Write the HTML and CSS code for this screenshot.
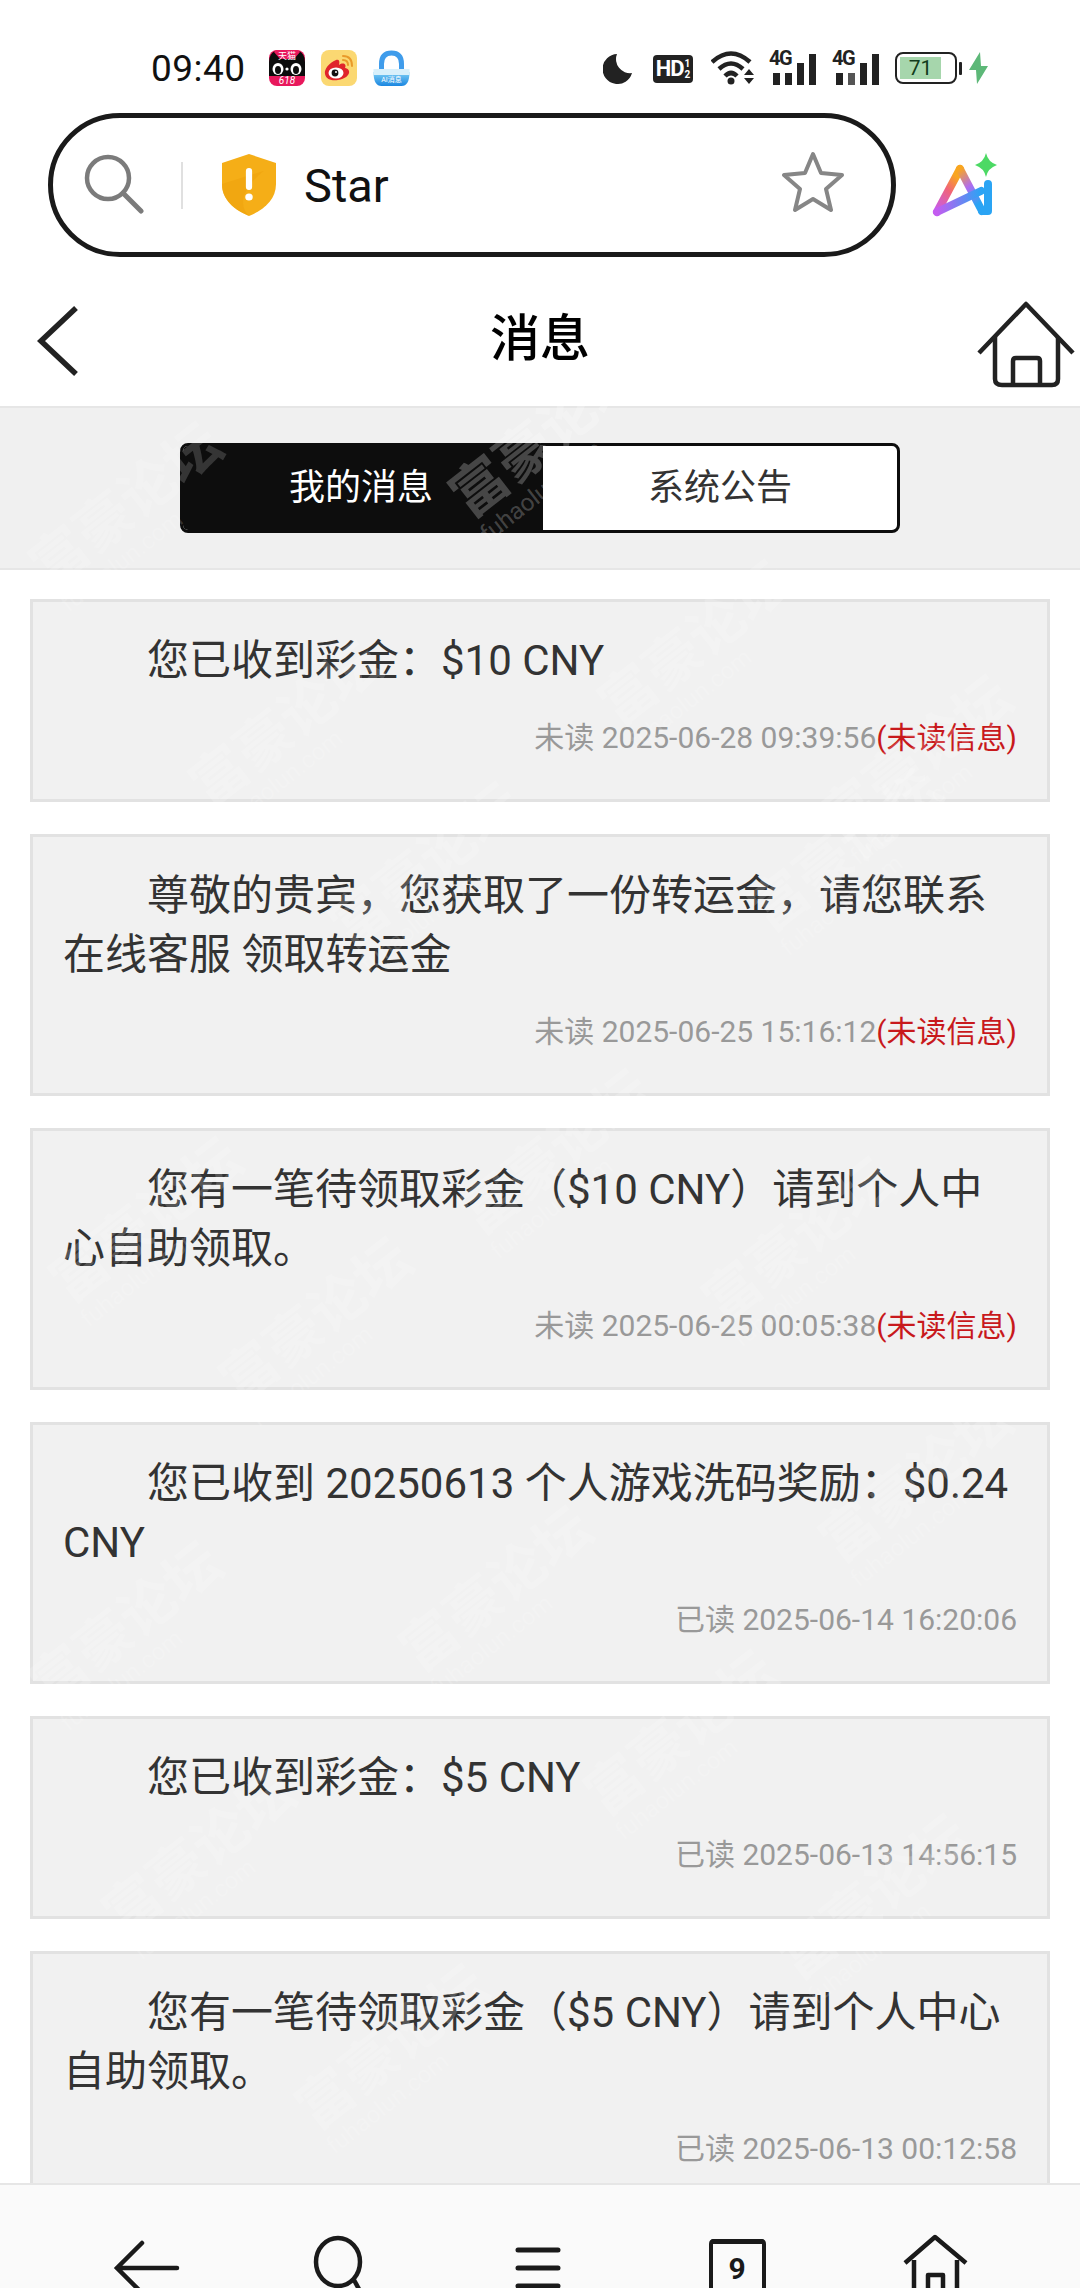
FILE: index.html
```html
<!DOCTYPE html>
<html lang="zh-CN">
<head>
  <meta charset="UTF-8">
  <title>消息</title>
  <link rel="stylesheet" href="styles.css">
</head>
<body>
  <div class="page">
    <!-- status bar -->
    <div class="status">
      <div class="status-left">
        <span class="time">09:40</span>
        <svg class="note note-first" width="36" height="36" viewBox="0 0 36 36">
          <rect width="36" height="36" rx="8" fill="#e8185c"/>
          <path d="M0 12 Q0 4 6 1 L12 8 H24 L30 1 Q36 4 36 12 V26 H0Z" fill="#0c0c0c"/>
          <path d="M8 0 H28 Q30 0 31 2 L25 9 H11 L5 2 Q6 0 8 0Z" fill="#e8185c"/>
          <text x="18" y="9" class="note-cn">天猫</text>
          <ellipse cx="9" cy="19" rx="5.5" ry="6" fill="#fff"/>
          <ellipse cx="27" cy="19" rx="5.5" ry="6" fill="#fff"/>
          <ellipse cx="9" cy="20" rx="3" ry="4" fill="#0c0c0c"/>
          <ellipse cx="27" cy="20" rx="3" ry="4" fill="#0c0c0c"/>
          <circle cx="18" cy="19" r="1.6" fill="#fff"/>
          <text x="18" y="34" class="note-618">618</text>
        </svg>
        <svg class="note" width="36" height="36" viewBox="0 0 36 36">
          <rect width="36" height="36" rx="8" fill="#fbd872"/>
          <path d="M15 10 C8 13 3 19 4 24 C5 30 12 31 17 30 C24 29 29 25 28 21 C27 18 24 18 24 18 C26 14 22 12 18 15 C19 11 18 9 15 10Z" fill="#e0242b"/>
          <ellipse cx="15" cy="23" rx="7.5" ry="5.5" fill="#fff"/>
          <circle cx="14" cy="23" r="3.4" fill="#111"/>
          <circle cx="15" cy="22" r="1" fill="#fff"/>
          <path d="M22 6 Q31 6 31 16 M22 10 Q27 10 27 15" fill="none" stroke="#e99a2a" stroke-width="2" stroke-linecap="round"/>
        </svg>
        <svg class="note" width="37" height="36" viewBox="0 0 36 36">
          <defs>
            <linearGradient id="lockBlue" x1="0" y1="0" x2="0" y2="1">
              <stop offset="0" stop-color="#7fd0f5"/>
              <stop offset="1" stop-color="#1a86e0"/>
            </linearGradient>
          </defs>
          <path d="M8 20 V14 Q8 3 18 3 Q28 3 28 14 V20" fill="none" stroke="#3f9ceb" stroke-width="5"/>
          <path d="M0 22 H36 Q36 36 28 36 H8 Q0 36 0 22Z" fill="url(#lockBlue)"/>
          <rect x="0" y="19" width="36" height="6" fill="#d8f0fb"/>
          <text x="18" y="32" class="note-lock">AI消息</text>
        </svg>
      </div>
      <div class="status-right">
        <svg class="moon" width="30" height="30" viewBox="0 0 30 30">
          <path d="M14 0 A15 15 0 1 0 29 19 A14 14 0 0 1 14 0Z" fill="#222"/>
        </svg>
        <span class="hd">HD<span class="hd-frac">1<br>2</span></span>
        <svg class="wifi" width="46" height="34" viewBox="0 0 46 34">
          <g fill="none" stroke="#222" stroke-width="4.5">
            <path d="M1 11 Q20 -6 39 11"/>
            <path d="M8 18 Q20 7 32 18"/>
            <path d="M14 25 Q20 19 26 25"/>
          </g>
          <circle cx="20" cy="30" r="3.5" fill="#222"/>
          <path d="M33 24 L38 18 L43 24Z M33 27 H43 L38 33Z" fill="#222"/>
        </svg>
        <div class="signal">
          <span class="signal-label">4G</span>
          <span class="bars">
            <i class="bar bar-1"></i><i class="bar bar-2"></i><i class="bar bar-3"></i><i class="bar bar-4"></i>
          </span>
        </div>
        <div class="signal signal-second">
          <span class="signal-label">4G</span>
          <span class="bars">
            <i class="bar bar-1"></i><i class="bar bar-2"></i><i class="bar bar-3"></i><i class="bar bar-4"></i>
          </span>
        </div>
        <div class="battery">
          <div class="battery-body">
            <div class="battery-fill">71</div>
          </div>
          <div class="battery-cap"></div>
        </div>
        <svg class="bolt" width="19" height="32" viewBox="0 0 19 32">
          <path d="M11 0 L0 18 H7 L8 32 L19 14 H12Z" fill="#5db878"/>
        </svg>
      </div>
    </div>

    <!-- browser address bar -->
    <div class="address">
      <div class="pill">
        <svg class="pill-search" width="60" height="60" viewBox="0 0 60 60">
          <circle cx="24" cy="24" r="21" fill="none" stroke="#7b7b7b" stroke-width="4.5"/>
          <path d="M39 39 L57 57" stroke="#7b7b7b" stroke-width="5" stroke-linecap="round"/>
        </svg>
        <span class="pill-divider"></span>
        <svg class="shield" width="54" height="62" viewBox="0 0 52 62" preserveAspectRatio="none">
          <path d="M26 0 L52 9 V30 C52 46 40 56 26 62 C12 56 0 46 0 30 V9Z" fill="#f5ae17"/>
          <path d="M0 30 V34 C2 47 13 56 26 62 C14 50 22 32 40 17 Z" fill="#eea20e" opacity="0.6"/>
          <rect x="23" y="14" width="6" height="22" rx="3" fill="#fff"/>
          <circle cx="26" cy="43" r="3.6" fill="#fff"/>
        </svg>
        <span class="pill-text">Star</span>
        <svg class="pill-star" width="62" height="62" viewBox="0 0 62 62">
          <path d="M31 3 L39 22 L60 24 L44 38 L49 59 L31 48 L13 59 L18 38 L2 24 L23 22Z" fill="none" stroke="#868686" stroke-width="4" stroke-linejoin="round"/>
        </svg>
      </div>
      <svg class="ai-logo" width="68" height="68" viewBox="0 0 68 68">
        <defs>
          <linearGradient id="aiLeft" x1="0" y1="1" x2="0.5" y2="0">
            <stop offset="0" stop-color="#c45cf0"/>
            <stop offset="0.6" stop-color="#f0637a"/>
            <stop offset="1" stop-color="#f9a61f"/>
          </linearGradient>
          <linearGradient id="aiRight" x1="0" y1="0" x2="0.4" y2="1">
            <stop offset="0" stop-color="#f9a61f"/>
            <stop offset="0.5" stop-color="#b06cf0"/>
            <stop offset="1" stop-color="#2aa4f4"/>
          </linearGradient>
          <linearGradient id="aiCross" x1="0" y1="0" x2="1" y2="0">
            <stop offset="0" stop-color="#c45cf0"/>
            <stop offset="1" stop-color="#2aa4f4"/>
          </linearGradient>
        </defs>
        <g fill="none" stroke-width="8" stroke-linecap="round" stroke-linejoin="round">
          <path d="M5 61 L28 18" stroke="url(#aiLeft)"/>
          <path d="M28 18 L50 60" stroke="url(#aiRight)"/>
          <path d="M5 61 L49 40" stroke="url(#aiCross)"/>
          <path d="M56 33 V60 H50" stroke="#2aa4f4"/>
        </g>
        <path d="M54 2 Q56 11 65 14 Q56 17 54 26 Q52 17 43 14 Q52 11 54 2Z" fill="#4cd964"/>
      </svg>
    </div>

    <!-- page title -->
    <header class="header">
      <svg class="back" width="44" height="74" viewBox="0 0 44 74">
        <path d="M39 4 L4 37 L39 70" fill="none" stroke="#222" stroke-width="5.5"/>
      </svg>
      <h1 class="title">消息</h1>
      <svg class="home" width="100" height="92" viewBox="0 0 100 92">
        <g fill="none" stroke="#222" stroke-width="4.5" stroke-linejoin="round">
          <path d="M2 52 L49 3 L96 52"/>
          <path d="M18 36 V78 Q18 84 25 84 H75 Q81 84 81 78 V36"/>
          <path d="M36 84 V60 Q36 57 39 57 H60 Q63 57 63 60 V84"/>
        </g>
      </svg>
    </header>

    <!-- switch -->
    <div class="tab-band">
      <div class="tabs">
        <div class="tab tab-active">我的消息</div>
        <div class="tab">系统公告</div>
      </div>
    </div>

    <!-- message list -->
    <main class="list">
      <article class="card">
        <p class="msg">您已收到彩金：$10 CNY</p>
        <p class="meta">未读 2025-06-28 09:39:56<span class="unread">(未读信息)</span></p>
      </article>
      <article class="card">
        <p class="msg">尊敬的贵宾，您获取了一份转运金，请您联系在线客服 领取转运金</p>
        <p class="meta">未读 2025-06-25 15:16:12<span class="unread">(未读信息)</span></p>
      </article>
      <article class="card">
        <p class="msg">您有一笔待领取彩金（$10 CNY）请到个人中心自助领取。</p>
        <p class="meta">未读 2025-06-25 00:05:38<span class="unread">(未读信息)</span></p>
      </article>
      <article class="card">
        <p class="msg">您已收到 20250613 个人游戏洗码奖励：$0.24 CNY</p>
        <p class="meta">已读 2025-06-14 16:20:06</p>
      </article>
      <article class="card">
        <p class="msg">您已收到彩金：$5 CNY</p>
        <p class="meta">已读 2025-06-13 14:56:15</p>
      </article>
      <article class="card">
        <p class="msg">您有一笔待领取彩金（$5 CNY）请到个人中心自助领取。</p>
        <p class="meta">已读 2025-06-13 00:12:58</p>
      </article>
    </main>

    <!-- browser toolbar, cut off by the bottom of the screen -->
    <nav class="toolbar">
      <svg width="80" height="70" viewBox="0 0 80 70">
        <path d="M35 13 L10 38 L35 63 M10 38 H70" fill="none" stroke="#1a1a1a" stroke-width="4.5" stroke-linecap="round"/>
      </svg>
      <svg width="80" height="70" viewBox="0 0 80 70">
        <ellipse cx="34" cy="32" rx="22" ry="24" fill="none" stroke="#1a1a1a" stroke-width="4.5"/>
        <path d="M50 50 L62 72" stroke="#1a1a1a" stroke-width="4.5"/>
      </svg>
      <svg width="80" height="70" viewBox="0 0 80 70">
        <path d="M17 20 H57 M17 38 H57 M17 56 H57" stroke="#1a1a1a" stroke-width="5" stroke-linecap="round"/>
      </svg>
      <svg width="80" height="70" viewBox="0 0 80 70">
        <path d="M13 80 V14 Q13 11 16 11 H63 Q66 11 66 14 V80" fill="none" stroke="#1a1a1a" stroke-width="4"/>
        <rect x="13" y="9" width="53" height="5" rx="2" fill="#1a1a1a"/>
        <text x="39" y="49" class="tab-count">9</text>
      </svg>
      <svg width="80" height="70" viewBox="0 0 80 70">
        <g fill="none" stroke="#1a1a1a" stroke-width="4.5" stroke-linejoin="round">
          <path d="M10 33 L40 7 L71 33"/>
          <path d="M19 30 V75 M62 30 V75"/>
          <path d="M33 75 V45 H48 V75"/>
        </g>
      </svg>
    </nav>

    <!-- site watermark laid over the whole shot -->
    <div class="marks">
      <span class="mark">富豪论坛<small>fuhaolun.com</small></span>
      <span class="mark">富豪论坛<small>fuhaolun.com</small></span>
      <span class="mark">富豪论坛<small>fuhaolun.com</small></span>
      <span class="mark">富豪论坛<small>fuhaolun.com</small></span>
      <span class="mark">富豪论坛<small>fuhaolun.com</small></span>
      <span class="mark">富豪论坛<small>fuhaolun.com</small></span>
      <span class="mark">富豪论坛<small>fuhaolun.com</small></span>
      <span class="mark">富豪论坛<small>fuhaolun.com</small></span>
      <span class="mark">富豪论坛<small>fuhaolun.com</small></span>
      <span class="mark">富豪论坛<small>fuhaolun.com</small></span>
      <span class="mark">富豪论坛<small>fuhaolun.com</small></span>
      <span class="mark">富豪论坛<small>fuhaolun.com</small></span>
      <span class="mark">富豪论坛<small>fuhaolun.com</small></span>
      <span class="mark">富豪论坛<small>fuhaolun.com</small></span>
      <span class="mark">富豪论坛<small>fuhaolun.com</small></span>
      <span class="mark">富豪论坛<small>fuhaolun.com</small></span>
      <span class="mark">富豪论坛<small>fuhaolun.com</small></span>
      <span class="mark">富豪论坛<small>fuhaolun.com</small></span>
    </div>
  </div>
</body>
</html>
```

FILE: styles.css
```css
* {
  box-sizing: border-box;
}
body {
  margin: 0;
  background: #fff;
  font-family: Roboto, "Noto Sans CJK SC", sans-serif;
  color: #333;
}
.page {
  position: relative;
  width: 1080px;
  height: 2288px;
  display: flex;
  flex-direction: column;
  overflow: hidden;
}

/* status bar */
.status {
  height: 113px;
  flex: none;
  padding-top: 50px;
  display: flex;
  justify-content: space-between;
  align-items: flex-start;
}
.status-left {
  display: flex;
  align-items: center;
  height: 36px;
  padding-left: 151px;
}
.time {
  font-size: 37px;
  line-height: 36px;
  letter-spacing: 0.5px;
  color: #111;
  width: 94px;
  margin-top: 1px;
}
.note {
  margin-left: 16px;
}
.note-first {
  margin-left: 24px;
}
.note-cn {
  font-size: 9px;
  fill: #fff;
  text-anchor: middle;
}
.note-618 {
  font-size: 10px;
  font-style: italic;
  fill: #fff;
  text-anchor: middle;
}
.note-lock {
  font-size: 7px;
  fill: #fff;
  text-anchor: middle;
}
.status-right {
  display: flex;
  align-items: center;
  height: 36px;
  padding-right: 92px;
}
.moon {
  margin-right: 20px;
  margin-top: 2px;
}
.hd {
  width: 40px;
  height: 28px;
  margin-right: 18px;
  margin-top: 2px;
  background: #222;
  border-radius: 4px;
  color: #fff;
  font-family: "Roboto", sans-serif;
  font-size: 22px;
  font-weight: 700;
  line-height: 28px;
  letter-spacing: -1px;
  display: flex;
  align-items: center;
  justify-content: center;
}
.hd-frac {
  font-size: 10px;
  line-height: 11px;
  margin-left: 1px;
  letter-spacing: 0;
  text-align: center;
}
.wifi {
  margin-right: 12px;
}
.signal {
  position: relative;
  width: 46px;
  height: 34px;
  margin-right: 17px;
}
.signal-label {
  position: absolute;
  left: 0;
  top: -3px;
  font-size: 20px;
  line-height: 20px;
  font-weight: 700;
  letter-spacing: -1.5px;
  color: #222;
}
.bars {
  position: absolute;
  left: 4px;
  bottom: 0;
  display: flex;
  align-items: flex-end;
  gap: 5px;
}
.bar {
  display: block;
  width: 7px;
  background: #222;
}
.bar-1 {
  height: 12px;
}
.bar-2 {
  height: 12px;
}
.bar-3 {
  height: 22px;
}
.bar-4 {
  height: 31px;
}
.signal-second .bar-2 {
  background: #555;
}
.battery {
  display: flex;
  align-items: center;
  width: 67px;
  height: 32px;
  margin-right: 7px;
}
.battery-body {
  width: 62px;
  height: 32px;
  padding: 3px;
  border: 2.5px solid #222;
  border-radius: 8px;
}
.battery-fill {
  width: 41px;
  height: 100%;
  background: #a6d6ac;
  color: #123c1c;
  font-size: 21px;
  line-height: 22px;
  text-align: center;
}
.battery-cap {
  width: 3px;
  height: 13px;
  margin-left: 2px;
  background: #222;
  border-radius: 1px;
}

/* address bar */
.address {
  height: 144px;
  flex: none;
  padding-left: 48px;
  display: flex;
  align-items: center;
}
.pill {
  width: 848px;
  height: 144px;
  border: 5px solid #1a1a1a;
  border-radius: 72px;
  display: flex;
  align-items: center;
}
.pill-search {
  margin-left: 31px;
  margin-top: -2px;
}
.pill-divider {
  width: 2px;
  height: 47px;
  margin-left: 37px;
  background: #e0e0e0;
}
.shield {
  margin-left: 39px;
}
.pill-text {
  margin-left: 28px;
  margin-top: 2px;
  font-size: 47px;
  line-height: 62px;
  color: #111;
}
.pill-star {
  margin-left: auto;
  margin-right: 47px;
  margin-top: -7px;
}
.ai-logo {
  margin-left: 36px;
}

/* title */
.header {
  height: 151px;
  flex: none;
  padding: 0 7px 0 37px;
  border-bottom: 2px solid #e6e6e6;
  display: flex;
  align-items: center;
  justify-content: space-between;
}
.back {
  margin-top: 18px;
}
.title {
  margin: 14px 0 0 22px;
  font-size: 50px;
  line-height: 60px;
  font-weight: 500;
  color: #000;
}
.home {
  margin-top: 31px;
  margin-right: -4px;
}

/* switch */
.tab-band {
  height: 162px;
  flex: none;
  padding-top: 35px;
  background: #f0f0f0;
  border-bottom: 2px solid #e6e6e6;
}
.tabs {
  width: 720px;
  height: 90px;
  margin: 0 auto;
  border: 3px solid #0d0d0d;
  border-radius: 8px;
  background: #fff;
  display: flex;
  overflow: hidden;
}
.tab {
  flex: 1;
  font-size: 36px;
  line-height: 84px;
  text-align: center;
  color: #333;
}
.tab-active {
  flex: none;
  width: 360px;
  padding-right: 4px;
  background: #0d0d0d;
  color: #fff;
}

/* messages */
.list {
  flex: 1;
  min-height: 0;
  padding: 29px 30px 0;
  display: flex;
  flex-direction: column;
  gap: 32px;
  overflow: hidden;
}
.card {
  flex: none;
  padding: 29px 30px 37px;
  background: #f1f1f1;
  border: 3px solid #e2e2e2;
}
.msg {
  margin: 0;
  font-size: 42px;
  line-height: 59px;
  text-indent: 84px;
  color: #333;
}
.meta {
  margin: 24px 0 0;
  font-size: 30px;
  line-height: 48px;
  text-align: right;
  color: #999;
}
.unread {
  color: #c8191c;
}

/* toolbar */
.toolbar {
  height: 105px;
  flex: none;
  padding: 45px 0 0 48px;
  background: #fafafa;
  border-top: 2px solid #e6e6e6;
  display: grid;
  grid-template-columns: repeat(5, 197px);
  justify-items: center;
  align-items: start;
  overflow: hidden;
}
.tab-count {
  font-size: 30px;
  font-weight: 700;
  fill: #1a1a1a;
  text-anchor: middle;
}

/* watermark */
.marks {
  position: absolute;
  inset: 0;
  pointer-events: none;
}
.mark {
  position: absolute;
  display: block;
  width: 240px;
  font-size: 56px;
  line-height: 58px;
  font-weight: 700;
  white-space: nowrap;
  color: rgba(255, 255, 255, 0.17);
  transform: translate(-50%, -50%) rotate(-38deg);
}
.mark small {
  display: block;
  font-size: 24px;
  line-height: 24px;
  font-weight: 400;
}
.mark:nth-child(1) { left: 560px; top: 440px; color: rgba(255, 255, 255, 0.24); }
.mark:nth-child(2) { left: 140px; top: 510px; }
.mark:nth-child(3) { left: 709px; top: 648px; }
.mark:nth-child(4) { left: 300px; top: 729px; }
.mark:nth-child(5) { left: 930px; top: 763px; }
.mark:nth-child(6) { left: 440px; top: 870px; }
.mark:nth-child(7) { left: 860px; top: 854px; }
.mark:nth-child(8) { left: 570px; top: 1157px; }
.mark:nth-child(9) { left: 160px; top: 1225px; }
.mark:nth-child(10) { left: 813px; top: 1245px; }
.mark:nth-child(11) { left: 330px; top: 1325px; }
.mark:nth-child(12) { left: 510px; top: 1594px; }
.mark:nth-child(13) { left: 140px; top: 1629px; }
.mark:nth-child(14) { left: 695px; top: 1738px; }
.mark:nth-child(15) { left: 213px; top: 1858px; }
.mark:nth-child(16) { left: 406px; top: 2052px; }
.mark:nth-child(17) { left: 888px; top: 1902px; }
.mark:nth-child(18) { left: 930px; top: 1485px; }
```
